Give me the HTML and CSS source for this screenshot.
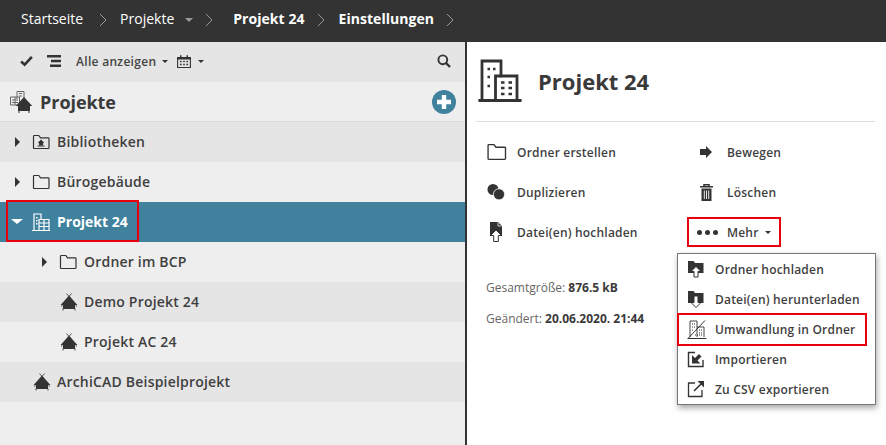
FILE: index.html
```html
<!DOCTYPE html>
<html lang="de">
<head>
<meta charset="utf-8">
<title>Projekt 24</title>
<link rel="stylesheet" href="styles.css">
</head>
<body>
<svg width="0" height="0" class="defs">
  <defs>
    <symbol id="folder" viewBox="0 0 18 16"><path d="M1.500 14.500V2.200q0-.7.7-.7h4.600l1.700 2.300h7.800q.7 0 .7.7v9.300q0 .7-.7.7H2.200q-.7 0-.7-.7z" fill="none" stroke="currentColor" stroke-width="1.200"/></symbol>
    <symbol id="house" viewBox="0 0 18 18"><path d="M6.500 .5L9 3.500l2.500-3" fill="none" stroke="currentColor" stroke-width=".8"/><path d="M9 2.600L17.400 12H15V16H3V12H.6z" fill="currentColor"/><path d="M3 15.500v2M15 15.500v2M1 13h1.500M15.500 13H17" stroke="currentColor" stroke-width=".9"/></symbol>
    <symbol id="building" viewBox="0 0 44 44"><path d="M4 40V2h19v15M1.500 41.500h41" fill="none" stroke="currentColor" stroke-width="2.800" stroke-linecap="round"/><path d="M17.500 40V17h21.500v23" fill="none" stroke="currentColor" stroke-width="2.800"/><path d="M9.500 10h2.500M15 10h2.500M9.500 18h2.500M9.500 27h2.500M23 23.500h3.500M30.500 23.500h3.500M23 29h3.500M30.500 29h3.500M23 35h3.500M30.500 35h3.500" stroke="currentColor" stroke-width="2.500"/></symbol>
  </defs>
</svg>
<header class="crumbs">
  <span class="crumb">Startseite</span><svg class="chev" viewBox="0 0 8 14"><path d="M1 1l6 6-6 6"/></svg>
  <span class="crumb c2">Projekte</span><span class="crumb-caret"></span><svg class="chev" viewBox="0 0 8 14"><path d="M1 1l6 6-6 6"/></svg>
  <b class="crumb c3">Projekt 24</b><svg class="chev tight" viewBox="0 0 8 14"><path d="M1 1l6 6-6 6"/></svg>
  <b class="crumb c4">Einstellungen</b><svg class="chev tight" viewBox="0 0 8 14"><path d="M1 1l6 6-6 6"/></svg>
</header>
<main class="split">
  <aside class="left">
    <div class="toolbar">
      <svg class="tool-check" viewBox="0 0 14 12"><path d="M1.200 6.500l3.800 3.500 7.800-8.500" fill="none" stroke="currentColor" stroke-width="2.800"/></svg>
      <svg class="tool-list" viewBox="0 0 14 12"><path d="M0 0h14v2.500H0zM4 4.700h10v2.600H4zM3 9.500h11V12H3z" fill="currentColor"/></svg>
      <span class="tool-label">Alle anzeigen</span><i class="caret"></i>
      <svg class="tool-cal" viewBox="0 0 14 13"><path d="M.6 2.500h12.800v10H.6z" fill="none" stroke="currentColor" stroke-width="1.100"/><path d="M.6 2h12.800v2.600H.6zM3 .3h1.500v2H3zM9.500 .3H11v2H9.500z" fill="currentColor"/><path d="M3 6.500h1.600M6.200 6.500h1.600M9.400 6.500H11M3 9.500h1.600M6.200 9.500h1.600M9.400 9.500H11" stroke="currentColor" stroke-width="1.300"/></svg><i class="caret cal-caret"></i>
      <svg class="tool-search" viewBox="0 0 14 14"><circle cx="5.800" cy="5.800" r="4.400" fill="none" stroke="currentColor" stroke-width="1.900"/><path d="M9 9l4 4" stroke="currentColor" stroke-width="2.400"/></svg>
    </div>
    <div class="panel-head">
      <svg class="head-icon" viewBox="0 0 24 24"><g fill="none" stroke="#666" stroke-width="1"><path d="M8 9V1.500h7V11"/><path d="M1.500 15V7h9v8z"/><path d="M3 10h6M3 12.500h6M6 7v8M10 3.500h3M10 6h3"/></g><path d="M15 7l8.300 9H21v5H9v-5H6.700z" fill="#333"/><path d="M10 21v2M20 21v2" stroke="#333"/></svg>
      <h1 class="panel-title">Projekte</h1>
      <svg class="add" viewBox="0 0 24 24"><circle cx="12" cy="12" r="12" fill="#40829e"/><path d="M12 5v14M5 12h14" stroke="#fff" stroke-width="4.400"/></svg>
    </div>
    <ul class="tree">
      <li class="row dark"><i class="arrow"></i><svg class="ic" viewBox="0 0 18 16"><use href="#folder"/><path d="M9 5.500l3.300 3.500H11v2.500H7V9H5.700z" fill="currentColor"/><path d="M5.500 12h7" stroke="currentColor"/></svg><span>Bibliotheken</span></li>
      <li class="row"><i class="arrow"></i><svg class="ic"><use href="#folder"/></svg><span>Bürogebäude</span></li>
      <li class="row sel"><i class="arrow open"></i><svg class="ic ic-b" viewBox="0 0 20 20"><g fill="none" stroke="#fff" stroke-width="1.200"><path d="M3 18.500V2h7v5M1 18.500h18"/><path d="M8 18V7.500h10V18"/><path d="M8 11h10M8 14.500h10M13 7.500V18"/></g><path d="M5 5h1.500v1.500H5zM5 8h1.500v1.500H5zM5 11h1.500v1.500H5z" fill="#fff"/></svg><span>Projekt 24</span></li>
      <li class="row lvl"><i class="arrow"></i><svg class="ic"><use href="#folder"/></svg><span>Ordner im BCP</span></li>
      <li class="row dark lvl plain"><svg class="ic"><use href="#house"/></svg><span>Demo Projekt 24</span></li>
      <li class="row lvl plain"><svg class="ic"><use href="#house"/></svg><span>Projekt AC 24</span></li>
      <li class="row dark top plain"><svg class="ic"><use href="#house"/></svg><span>ArchiCAD Beispielprojekt</span></li>
    </ul>
    <div class="mark-tree"></div>
  </aside>
  <section class="right">
    <div class="detail-head">
      <svg class="big-icon"><use href="#building"/></svg>
      <h2 class="detail-title">Projekt 24</h2>
    </div>
    <div class="actions">
      <div class="action"><svg class="ac-ic wide"><use href="#folder"/></svg><span>Ordner erstellen</span></div>
      <div class="action"><svg class="ac-ic small" viewBox="0 0 12 12"><path d="M0 3h6V0l6 6-6 6V9H0z" fill="currentColor"/></svg><span>Bewegen</span></div>
      <div class="action"><svg class="ac-ic" viewBox="0 0 18 16"><circle cx="6" cy="5.500" r="5.500" fill="currentColor"/><circle cx="12" cy="10.300" r="5.600" fill="currentColor" stroke="#fff" stroke-width=".8"/></svg><span>Duplizieren</span></div>
      <div class="action"><svg class="ac-ic small trash" viewBox="0 0 13 17"><path d="M0 2.700h13M4 2.700V.8h5v1.900" fill="none" stroke="currentColor" stroke-width="1.500"/><path d="M1.500 4.500h10V17h-10z" fill="currentColor"/><path d="M4.300 6.500v8.500M6.500 6.500v8.500M8.700 6.500v8.500" stroke="#fff" stroke-width=".9"/></svg><span>Löschen</span></div>
      <div class="action"><svg class="ac-ic tall" viewBox="0 0 18 20"><path d="M3 0h8l4 4v10H3z" fill="currentColor"/><path d="M11 .5V4h3.500" fill="none" stroke="#fff" stroke-width=".8"/><path d="M9 8l5.500 5.500h-3.200V19.500H6.700V13.500H3.500z" fill="#fff" stroke="currentColor" stroke-width="1"/></svg><span>Datei(en) hochladen</span></div>
      <div class="action more"><span class="dots"><i></i><i></i><i></i></span><span>Mehr</span><i class="caret"></i></div>
    </div>
    <p class="meta">Gesamtgröße: <b>876.5 kB</b></p>
    <p class="meta">Geändert: <b>20.06.2020. 21:44</b></p>
    <div class="menu">
      <div class="menu-item"><svg class="menu-ic" viewBox="0 0 18 18"><path d="M1 1h5.500l1.500 2h8.500v10H1z" fill="currentColor"/><path d="M9 6.500l5 5h-3V17H7v-5.500H4z" fill="#fff" stroke="currentColor" stroke-width="1"/></svg><span>Ordner hochladen</span></div>
      <div class="menu-item"><svg class="menu-ic" viewBox="0 0 18 18"><path d="M1 1h5.500l1.500 2h8.500v10H1z" fill="currentColor"/><path d="M9 17.500l5-5h-3V6H7v6.500H4z" fill="#fff" stroke="currentColor" stroke-width="1"/></svg><span>Datei(en) herunterladen</span></div>
      <div class="menu-item boxed"><svg class="menu-ic conv" viewBox="0 0 20 20"><path d="M3 18V2h7v16M10 8h7v10" fill="none" stroke="currentColor" stroke-width=".9"/><path d="M.5 19.500h19M1.500 19L18 1.500" stroke="currentColor"/><path d="M5 5h3M5 8h3M5 11h1M12 11h3M12 14h3M8 16h7" stroke="currentColor" stroke-width="1.100" stroke-dasharray="1 1"/></svg><span>Umwandlung in Ordner</span></div>
      <div class="menu-item"><svg class="menu-ic" viewBox="0 0 18 18"><path d="M8 2.500H1.500V16.500H16V10" fill="none" stroke="currentColor" stroke-width="1.400"/><path d="M5 5v8.500h8.500l-3-3 4-4-2.500-2.500-4 4z" fill="currentColor"/></svg><span>Importieren</span></div>
      <div class="menu-item"><svg class="menu-ic" viewBox="0 0 18 18"><path d="M8 3H1.500v13.500H15V10" fill="none" stroke="currentColor" stroke-width="1.300"/><path d="M7 11l7-7" stroke="currentColor" stroke-width="1.600"/><path d="M10.500 1H17v6.500z" fill="currentColor"/></svg><span>Zu CSV exportieren</span></div>
    </div>
  </section>
</main>
</body>
</html>
```

FILE: styles.css
```css
*, *::before, *::after { box-sizing: border-box; }
html, body { margin: 0; height: 445px; overflow: hidden; }
body { font-family: "Open Sans", sans-serif; font-size: 13px; color: #3a3a3a; background: #fff; }
.defs { position: absolute; }
i { display: block; }

.crumbs { height: 42px; background: #333; color: #fff; display: flex; align-items: center; padding: 0 0 5px 21px; font-size: 14px; }
.crumb { white-space: nowrap; }
.crumbs b { font-weight: 700; letter-spacing: .05px; }
.c2 { margin-left: 13px; }
.c3 { margin-left: 20px; }
.chev { width: 8px; height: 14px; margin-left: 16px; fill: none; stroke: #999; stroke-width: 1; margin-top: 3px; }
.chev.tight { margin-left: 12px; }
.c4 { margin-left: 14px; }
.crumb-caret { width: 0; height: 0; margin-left: 11px; margin-top: 3px; border: 4px solid transparent; border-top: 4px solid #999; border-bottom: 0; }
.crumb-caret + .chev { margin-left: 12px; }

.split { display: flex; height: 403px; }
.left { position: relative; width: 467px; flex: none; background: #eee; border-right: 2px solid #333; }
.right { position: relative; flex: 1; padding: 0 0 0 9px; }

.toolbar { height: 40px; background: #e5e5e5; display: flex; align-items: center; padding: 0 14px 2px 20px; color: #333; }
.tool-check { width: 13px; height: 12px; }
.tool-list { width: 14px; height: 12px; margin-left: 14px; }
.tool-label { margin-left: 15px; font-size: 12px; font-weight: 600; color: #444; letter-spacing: .3px; }
.caret { width: 0; height: 0; margin-left: 6px; border: 3.500px solid transparent; border-top: 3.500px solid #333; border-bottom: 0; }
.tool-cal { width: 14px; height: 13px; margin-left: 9px; }
.cal-caret { margin-left: 7px; }
.tool-search { width: 14px; height: 14px; margin-left: auto; }

.panel-head { height: 40px; display: flex; align-items: center; padding: 0 9px; border-bottom: 1px solid #d9d9d9; }
.head-icon { width: 24px; height: 24px; }
.panel-title { margin: 0 0 0 7px; font-size: 18px; font-weight: 700; color: #3a3a3a; letter-spacing: -.05px; }
.add { width: 24px; height: 24px; margin-left: auto; }

.tree { list-style: none; margin: 0; padding: 0; }
.row { height: 40px; display: flex; align-items: center; padding: 0 0 1px 15px; font-size: 14px; font-weight: 600; color: #3f3f3f; letter-spacing: .2px; }
.row.dark { background: #e5e5e5; }
.row.sel { background: #40829e; color: #fff; font-weight: 700; letter-spacing: 0; }
.row.lvl { padding-left: 42px; }
.row.lvl.plain { padding-left: 60px; }
.row.top.plain { padding-left: 33px; }
.arrow { width: 0; height: 0; border: 5px solid transparent; border-left: 5.500px solid #333; border-right: 0; }
.arrow.open { margin-left: -4px; border: 6px solid transparent; border-top: 5.500px solid #fff; border-bottom: 0; }
.ic { width: 18px; height: 16px; margin: 0 7px 0 12px; flex: none; color: #333; }
.row.plain .ic { margin-left: 0; margin-right: 6px; height: 18px; }
.ic-b { width: 20px; height: 20px; margin-left: 8px; margin-right: 6px; }
.mark-tree { position: absolute; left: 6px; top: 158px; width: 133px; height: 42px; border: 2px solid #e8000f; }

.detail-head { display: flex; align-items: center; height: 80px; width: 399px; padding-left: 2px; border-bottom: 1px solid #ddd; }
.big-icon { width: 44px; height: 44px; color: #333; margin-bottom: 2px; }
.detail-title { margin: 0 0 2px 16px; font-size: 22px; font-weight: 700; color: #3a3a3a; }

.actions { display: grid; grid-template-columns: 210px 200px; grid-auto-rows: 40px; margin-top: 10px; margin-left: 11px; }
.action { display: flex; align-items: center; font-size: 12px; font-weight: 600; color: #3f3f3f; letter-spacing: .2px; }
.ac-ic { width: 18px; height: 16px; margin-right: 12px; flex: none; color: #333; }
.ac-ic.wide { width: 21px; height: 18px; margin: 0 10px 0 -1px; }
.ac-ic.small { width: 12px; height: 12px; margin-right: 15px; margin-left: 3px; }
.ac-ic.trash { width: 13px; height: 17px; margin-right: 14px; }
.ac-ic.tall { height: 20px; }
.more { position: relative; }
.more::after { content: ""; position: absolute; left: -10px; top: 5px; width: 94px; height: 30px; border: 2px solid #e8000f; }
.dots { display: flex; gap: 3px; width: 30px; flex: none; }
.dots i { width: 5px; height: 5px; border-radius: 50%; background: #333; }

.meta { margin: 0; height: 31px; line-height: 18px; font-size: 12px; color: #666; padding-left: 10px; }
.actions + .meta { margin-top: 27px; }
.meta b { font-weight: 700; color: #3a3a3a; }

.menu { position: absolute; left: 210px; top: 211px; width: 199px; height: 152px; background: #fff; border: 1px solid #777; box-shadow: 1px 3px 6px rgba(0,0,0,.35); }
.menu-item { position: relative; height: 30px; display: flex; align-items: center; padding-left: 9px; font-size: 12px; font-weight: 600; color: #3f3f3f; letter-spacing: .2px; }
.menu-ic { width: 18px; height: 18px; margin-right: 10px; color: #333; flex: none; }
.conv { width: 20px; height: 20px; margin-right: 8px; }
.boxed::after { content: ""; position: absolute; left: -1px; width: 190px; top: -1px; height: 33px; border: 2px solid #e8000f; }
```
